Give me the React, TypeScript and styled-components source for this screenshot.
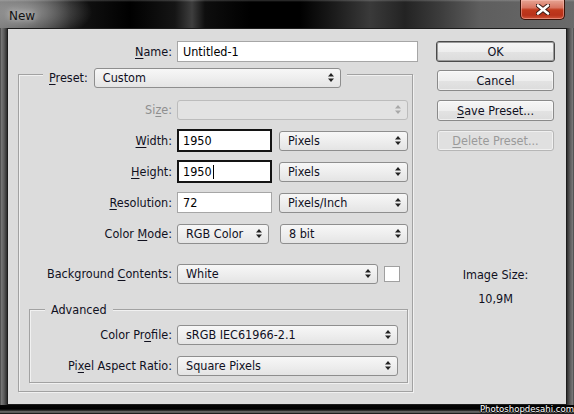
import styled, { createGlobalStyle } from 'styled-components';

const ink = '#10101e';
const face = '#dcdcdc';

const GlobalStyle = createGlobalStyle`
  html, body { margin: 0; padding: 0; background: #000; }
  body {
    font-family: "DejaVu Sans Condensed", "DejaVu Sans", "Liberation Sans", sans-serif;
    font-size: 12.5px;
    color: ${ink};
  }
  * { box-sizing: border-box; }
`;

const Window = styled.div`
  width: 574px;
  height: 414px;
  display: flex;
  flex-direction: column;
  overflow: hidden;
  background: linear-gradient(90deg, #2c2c2c 0, #7a7a7a 1px, #5c5c5c 4px, #2e2e2e 7px, #000 8px,
    #000 566px, #2e2e2e 567px, #5a5a5a 570px, #7a7a7a 573px, #2c2c2c 574px);
`;

const TitleBar = styled.div`
  height: 28px;
  flex: none;
  display: flex;
  align-items: flex-start;
  padding-left: 9px;
  background:
    linear-gradient(180deg, rgba(255, 255, 255, 0.2) 0, rgba(255, 255, 255, 0) 2px),
    radial-gradient(ellipse 70px 30px at 22px 12px, rgba(160, 160, 160, 0.9), rgba(160, 160, 160, 0) 100%),
    linear-gradient(90deg, #6e6e6e 0, #4a4a4a 30px, #161616 70px, #000 130px, #151515 175px,
      #3e3e3e 192px, #0e0e0e 205px, #000 250px, #000 300px, #1c1c1c 335px, #3a3a3a 370px,
      #232323 405px, #3c3c3c 440px, #5e5e5e 480px, #6a6a6a 574px);
`;

const Title = styled.div`
  padding-top: 9px;
  line-height: 14px;
  font-family: "DejaVu Sans", sans-serif;
  font-size: 12px;
  color: #121212;
  text-shadow: 0 0 6px rgba(255, 255, 255, 0.7);
`;

const CloseButton = styled.div`
  margin-left: auto;
  margin-right: 9px;
  width: 45px;
  height: 20px;
  display: flex;
  align-items: center;
  justify-content: center;
  border: 1px solid #3a1208;
  border-top: none;
  border-radius: 0 0 5px 5px;
  background: linear-gradient(180deg, #e6a493 0, #d87561 40%, #c0391c 52%, #b8321a 80%, #d0553a 100%);
  box-shadow: inset 0 0 0 1px rgba(255, 200, 190, 0.45);
`;

const Client = styled.div`
  flex: 1;
  margin: 0 7px;
  border: 1px solid #1c1c1c;
  background: ${face};
  display: grid;
  grid-template-columns: 400px 119px;
  column-gap: 18px;
  align-items: start;
  padding: 12px 11px 0 10px;
`;

const Column = styled.div`
  display: flex;
  flex-direction: column;
`;

const Row = styled.div<{ $gap?: number }>`
  display: flex;
  align-items: center;
  height: 21px;
  margin-top: ${(p) => p.$gap ?? 10}px;
`;

const Label = styled.div<{ $disabled?: boolean }>`
  flex: 1;
  text-align: right;
  padding-right: 5px;
  white-space: nowrap;
  color: ${(p) => (p.$disabled ? '#8f8f8f' : ink)};
`;

const Key = styled.span`
  text-decoration: underline;
  text-underline-offset: 2px;
`;

const Controls = styled.div<{ $w: number; $gap?: number }>`
  width: ${(p) => p.$w}px;
  flex: none;
  display: flex;
  align-items: center;
  gap: ${(p) => p.$gap ?? 7}px;
`;

const Group = styled.div<{ $top: number; $left?: number; $right?: number; $padRight: number; $padBottom: number }>`
  display: flex;
  flex-direction: column;
  margin: ${(p) => p.$top}px ${(p) => p.$right ?? 0}px 0 ${(p) => p.$left ?? 0}px;
  padding: 0 ${(p) => p.$padRight}px ${(p) => p.$padBottom}px 0;
  border: 1px solid #a2a2a2;
  box-shadow: inset 1px 1px 0 #f1f1f1, 1px 1px 0 #f1f1f1;
`;

const Legend = styled.div<{ $left: number; $h: number }>`
  align-self: flex-start;
  display: flex;
  align-items: center;
  gap: 6px;
  height: ${(p) => p.$h}px;
  margin: -8px 0 0 ${(p) => p.$left}px;
  padding: 0 6px;
  background: ${face};
  white-space: nowrap;
`;

const SelectBox = styled.div<{ $w: number; $disabled?: boolean }>`
  width: ${(p) => p.$w}px;
  height: 20px;
  flex: none;
  display: flex;
  align-items: center;
  justify-content: space-between;
  padding: 0 6px 0 8px;
  border: 1px solid ${(p) => (p.$disabled ? '#bcbcbc' : '#8e8e8e')};
  border-radius: 3px;
  background: ${(p) =>
    p.$disabled
      ? '#e2e2e2'
      : 'linear-gradient(180deg, #f7f7f7 0%, #eeeeee 50%, #e4e4e4 100%)'};
  color: ${ink};
  white-space: nowrap;
`;

const TextBox = styled.div<{ $w: number; $focused?: boolean }>`
  width: ${(p) => p.$w}px;
  height: ${(p) => (p.$focused ? 23 : 21)}px;
  flex: none;
  display: flex;
  align-items: center;
  padding-left: ${(p) => (p.$focused ? 4 : 5)}px;
  background: #fff;
  border: ${(p) => (p.$focused ? '2px solid #141414' : '1px solid #a6a6a6')};
  color: #000;
`;

const Caret = styled.span`
  display: inline-block;
  width: 1px;
  height: 14px;
  margin-left: 1px;
  background: #000;
`;

const Swatch = styled.div`
  width: 16px;
  height: 16px;
  flex: none;
  background: #fff;
  border: 1px solid #a0a0a0;
`;

const Button = styled.div<{ $primary?: boolean; $disabled?: boolean; $gap: number }>`
  height: 21px;
  margin: ${(p) => p.$gap}px ${(p) => (p.$primary ? 0 : 1)}px 0;
  display: flex;
  align-items: center;
  justify-content: center;
  border: 1px solid ${(p) => (p.$primary ? '#4a4a4a' : p.$disabled ? '#b6b6b6' : '#8a8a8a')};
  border-radius: 3px;
  background: ${(p) =>
    p.$disabled ? '#e0e0e0' : 'linear-gradient(180deg, #f6f6f6 0%, #eeeeee 50%, #e3e3e3 51%, #dcdcdc 100%)'};
  box-shadow: ${(p) => (p.$primary ? 'inset 0 0 0 1px #9a9a9a' : 'inset 0 0 0 1px rgba(255,255,255,0.5)')};
  color: ${(p) => (p.$disabled ? '#9a9a9a' : ink)};
  white-space: nowrap;
`;

const Info = styled.div<{ $gap: number }>`
  margin-top: ${(p) => p.$gap}px;
  line-height: 16px;
  text-align: center;
`;

const BottomFrame = styled.div`
  height: 9px;
  flex: none;
  display: flex;
  justify-content: flex-end;
  align-items: flex-end;
  background: linear-gradient(180deg, #050505 0, #000 4px, #3a3a3a 6px, #8a8a8a 7px, #2a2a2a 8px, #111 9px);
`;

const Watermark = styled.div`
  font-family: "DejaVu Sans Condensed", "DejaVu Sans", sans-serif;
  font-size: 9.5px;
  line-height: 10px;
  color: #fff;
  text-shadow: 1px 0 0 #000, -1px 0 0 #000, 0 1px 0 #000, 0 -1px 0 #000;
`;

function Arrows({ disabled }: { disabled?: boolean }) {
  const c = disabled ? '#a8a8a8' : '#222';
  return (
    <svg width="6" height="9" viewBox="0 0 6 9">
      <path d="M3 0 L6 3.5 L0 3.5 Z" fill={c} />
      <path d="M0 5.5 L6 5.5 L3 9 Z" fill={c} />
    </svg>
  );
}

function Dropdown({ value, width, disabled }: { value: string; width: number; disabled?: boolean }) {
  return (
    <SelectBox $w={width} $disabled={disabled}>
      <span>{value}</span>
      <Arrows disabled={disabled} />
    </SelectBox>
  );
}

function CloseGlyph() {
  return (
    <svg width="14" height="11" viewBox="0 0 14 11">
      <path d="M2 1.5 L12 9.5 M12 1.5 L2 9.5" stroke="#3a1a14" strokeWidth="4.5" strokeLinecap="round" />
      <path d="M2 1.5 L12 9.5 M12 1.5 L2 9.5" stroke="#ffffff" strokeWidth="2.6" strokeLinecap="round" />
    </svg>
  );
}

export default function App() {
  return (
    <>
      <GlobalStyle />
      <Window>
        <TitleBar>
          <Title>New</Title>
          <CloseButton>
            <CloseGlyph />
          </CloseButton>
        </TitleBar>

        <Client>
          <Column>
            <Row $gap={0}>
              <Label><Key>N</Key>ame:</Label>
              <Controls $w={241}>
                <TextBox $w={241}>Untitled-1</TextBox>
              </Controls>
            </Row>

            <Group $top={12} $right={5} $padRight={4} $padBottom={8}>
              <Legend $left={24} $h={21}>
                <span><Key>P</Key>reset:</span>
                <Dropdown value="Custom" width={247} />
              </Legend>

              <Row $gap={11}>
                <Label $disabled>Si<Key>z</Key>e:</Label>
                <Controls $w={231}>
                  <Dropdown value="" width={231} disabled />
                </Controls>
              </Row>
              <Row>
                <Label><Key>W</Key>idth:</Label>
                <Controls $w={231}>
                  <TextBox $w={95} $focused>1950</TextBox>
                  <Dropdown value="Pixels" width={129} />
                </Controls>
              </Row>
              <Row>
                <Label><Key>H</Key>eight:</Label>
                <Controls $w={231}>
                  <TextBox $w={95} $focused>1950<Caret /></TextBox>
                  <Dropdown value="Pixels" width={129} />
                </Controls>
              </Row>
              <Row>
                <Label><Key>R</Key>esolution:</Label>
                <Controls $w={231}>
                  <TextBox $w={95}>72</TextBox>
                  <Dropdown value="Pixels/Inch" width={129} />
                </Controls>
              </Row>
              <Row>
                <Label>Color <Key>M</Key>ode:</Label>
                <Controls $w={231} $gap={11}>
                  <Dropdown value="RGB Color" width={92} />
                  <Dropdown value="8 bit" width={128} />
                </Controls>
              </Row>
              <Row $gap={19}>
                <Label>Background <Key>C</Key>ontents:</Label>
                <Controls $w={231} $gap={6}>
                  <Dropdown value="White" width={201} />
                  <Swatch />
                </Controls>
              </Row>

              <Group $top={25} $left={10} $padRight={9} $padBottom={6}>
                <Legend $left={15} $h={15}>Advanced</Legend>
                <Row $gap={7}>
                  <Label>Color Pr<Key>o</Key>file:</Label>
                  <Controls $w={221}>
                    <Dropdown value="sRGB IEC61966-2.1" width={221} />
                  </Controls>
                </Row>
                <Row>
                  <Label>Pi<Key>x</Key>el Aspect Ratio:</Label>
                  <Controls $w={221}>
                    <Dropdown value="Square Pixels" width={221} />
                  </Controls>
                </Row>
              </Group>
            </Group>
          </Column>

          <Column>
            <Button $primary $gap={0}>OK</Button>
            <Button $gap={8}>Cancel</Button>
            <Button $gap={9}><span><Key>S</Key>ave Preset...</span></Button>
            <Button $gap={9} $disabled><span><Key>D</Key>elete Preset...</span></Button>
            <Info $gap={116}>Image Size:</Info>
            <Info $gap={8}>10,9M</Info>
          </Column>
        </Client>

        <BottomFrame>
          <Watermark>Photoshopdesahi.com</Watermark>
        </BottomFrame>
      </Window>
    </>
  );
}
